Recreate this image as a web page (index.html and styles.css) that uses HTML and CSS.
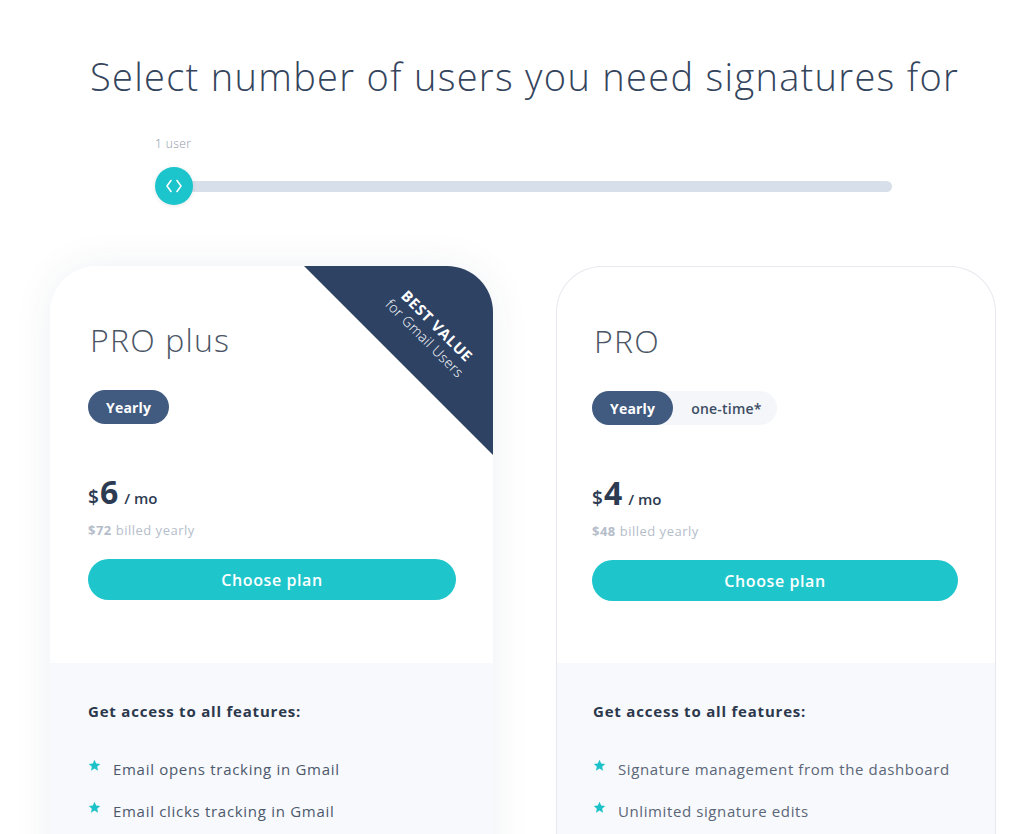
FILE: index.html
```html
<!DOCTYPE html>
<html lang="en">
<head>
<meta charset="utf-8">
<title>Pricing</title>
<link rel="stylesheet" href="styles.css">
</head>
<body>
<div class="page">
  <h1 class="title">Select number of users you need signatures for</h1>

  <div class="slider">
    <div class="slider-label">1 user</div>
    <div class="slider-row">
      <div class="slider-track"></div>
      <div class="knob">
        <svg width="20" height="16" viewBox="0 0 20 16"><path d="M7 2.5 L3 8 L7 13.5 M13 2.5 L17 8 L13 13.5" fill="none" stroke="#fff" stroke-width="1.6" stroke-linecap="round" stroke-linejoin="round"/></svg>
      </div>
    </div>
  </div>

  <div class="cards">
    <div class="card card-featured">
      <div class="ribbon">
        <div class="ribbon-text">
          <div class="ribbon-main">BEST VALUE</div>
          <div class="ribbon-sub">for Gmail Users</div>
        </div>
      </div>
      <div class="card-top">
        <h2 class="plan-name">PRO plus</h2>
        <div class="toggle">
          <span class="pill active">Yearly</span>
        </div>
        <div class="price"><span class="cur">$</span><span class="amount">6</span><span class="per">/ mo</span></div>
        <div class="billed"><b>$72</b> billed yearly</div>
        <button class="choose">Choose plan</button>
      </div>
      <div class="card-bottom">
        <div class="feat-title">Get access to all features:</div>
        <ul class="features medium">
          <li><svg class="star" viewBox="0 0 24 24"><path d="M12 1.5l3.1 6.9 7.4.7-5.6 5 1.7 7.4L12 17.6l-6.6 3.9 1.7-7.4-5.6-5 7.4-.7z"/></svg>Email opens tracking in Gmail</li>
          <li><svg class="star" viewBox="0 0 24 24"><path d="M12 1.5l3.1 6.9 7.4.7-5.6 5 1.7 7.4L12 17.6l-6.6 3.9 1.7-7.4-5.6-5 7.4-.7z"/></svg>Email clicks tracking in Gmail</li>
        </ul>
      </div>
    </div>

    <div class="card card-plain">
      <div class="card-top">
        <h2 class="plan-name">PRO</h2>
        <div class="toggle toggle-group">
          <span class="pill active">Yearly</span>
          <span class="pill">one-time*</span>
        </div>
        <div class="price"><span class="cur">$</span><span class="amount">4</span><span class="per">/ mo</span></div>
        <div class="billed"><b>$48</b> billed yearly</div>
        <button class="choose">Choose plan</button>
      </div>
      <div class="card-bottom">
        <div class="feat-title">Get access to all features:</div>
        <ul class="features">
          <li><svg class="star" viewBox="0 0 24 24"><path d="M12 1.5l3.1 6.9 7.4.7-5.6 5 1.7 7.4L12 17.6l-6.6 3.9 1.7-7.4-5.6-5 7.4-.7z"/></svg>Signature management from the dashboard</li>
          <li><svg class="star" viewBox="0 0 24 24"><path d="M12 1.5l3.1 6.9 7.4.7-5.6 5 1.7 7.4L12 17.6l-6.6 3.9 1.7-7.4-5.6-5 7.4-.7z"/></svg>Unlimited signature edits</li>
        </ul>
      </div>
    </div>
  </div>
</div>
</body>
</html>
```

FILE: styles.css
```css
* { box-sizing: border-box; }
html, body { margin: 0; padding: 0; background: #fff; }
body {
  font-family: "Open Sans", "Noto Sans", sans-serif;
  color: #2f3e55;
  overflow: hidden;
}
.page {
  width: 1046px;
  padding: 52px 0 0 50px;
}
.title {
  margin: 0;
  font-size: 38px;
  line-height: 48px;
  font-weight: 300;
  color: #34445c;
  padding-left: 40px;
  letter-spacing: 1.3px;
  white-space: nowrap;
}
.slider {
  margin-top: 36px;
  padding-left: 105px;
  width: 842px;
}
.slider-label {
  font-size: 12px;
  line-height: 16px;
  color: #8d97a6;
  font-weight: 300;
  letter-spacing: 0.4px;
}
.slider-row {
  position: relative;
  height: 40px;
  margin-top: 14px;
  display: flex;
  align-items: center;
}
.slider-track {
  margin-left: 20px;
  flex: 1;
  height: 11px;
  border-radius: 6px;
  background: #d7dfeb;
}
.knob {
  position: absolute;
  left: 0;
  top: 1px;
  width: 38px;
  height: 38px;
  border-radius: 50%;
  background: #1cc4cb;
  display: flex;
  align-items: center;
  justify-content: center;
  box-shadow: 0 1px 4px rgba(0,0,0,0.10);
}
.cards {
  display: flex;
  gap: 63px;
  margin-top: 60px;
}
.card {
  position: relative;
  width: 443px;
  border-radius: 46px 46px 0 0;
  overflow: hidden;
  background: #fff;
}
.card-featured {
  box-shadow: 0 0 40px rgba(30, 50, 90, 0.07);
}
.card-plain {
  width: 440px;
  border: 1px solid #e6e9ee;
  border-bottom: none;
}
.card-top {
  height: 397px;
  padding: 54px 37px 0 38px;
}
.card-plain .card-top { height: 396px; padding-left: 35px; padding-right: 37px; }
.plan-name {
  margin: 0;
  font-size: 32px;
  line-height: 40px;
  font-weight: 300;
  color: #4b5565;
  padding-left: 2px;
  letter-spacing: 1.2px;
}
.toggle {
  margin-top: 30px;
  display: flex;
  height: 34px;
}
.toggle-group {
  width: 185px;
  background: #f4f6fa;
  border-radius: 17px;
}
.pill {
  flex-shrink: 0;
  white-space: nowrap;
  height: 34px;
  border-radius: 17px;
  padding: 0 18px;
  display: flex;
  align-items: center;
  font-size: 14px;
  font-weight: 700;
  color: #3d4c63;
  letter-spacing: 0.2px;
}
.pill.active {
  background: #415a80;
  color: #fff;
}
.toggle-group .pill { font-weight: 600; }
.toggle-group .pill.active { font-weight: 700; }
.price {
  margin-top: 46px;
  display: flex;
  align-items: baseline;
  color: #2d3b52;
  height: 36px;
}
.cur { font-size: 19px; font-weight: 600; }
.amount { font-size: 32px; font-weight: 700; margin-left: 1px; }
.per { font-size: 15px; font-weight: 600; margin-left: 6px; }
.billed {
  margin-top: 15px;
  font-size: 13px;
  color: #b5bdca;
  font-weight: 400;
  letter-spacing: 0.5px;
}
.billed b { font-weight: 700; }
.choose {
  margin-top: 20px;
  width: 100%;
  height: 41px;
  border: none;
  border-radius: 21px;
  background: #1ec6cc;
  color: #fff;
  font-family: inherit;
  font-size: 16px;
  font-weight: 600;
  letter-spacing: 0.6px;
  display: block;
}
.card-bottom {
  background: #f7f9fc;
  padding: 38px 37px 40px 38px;
  height: 260px;
}
.card-plain .card-bottom { padding-left: 36px; }
.feat-title {
  font-size: 15px;
  font-weight: 700;
  color: #2c384c;
  line-height: 20px;
  letter-spacing: 0.8px;
}
.features {
  list-style: none;
  margin: 27px 0 0 0;
  padding: 0;
}
.features li {
  display: flex;
  align-items: center;
  height: 42px;
  font-size: 15px;
  color: #5b6678;
  font-weight: 400;
  letter-spacing: 0.6px;
}
.features.medium li { font-weight: 500; color: #4c586b; letter-spacing: 0.7px; }
.star {
  width: 13px;
  height: 13px;
  fill: #1dc2c9;
  margin: 0 12px 0 0;
  position: relative;
  top: -4px;
  flex-shrink: 0;
}
.ribbon {
  position: absolute;
  top: 0;
  right: 0;
  width: 189px;
  height: 189px;
  background: #2e4264;
  clip-path: polygon(0 0, 100% 0, 100% 100%);
}
.ribbon-text {
  position: absolute;
  left: 42px;
  top: 48px;
  width: 170px;
  transform: rotate(45deg);
  text-align: center;
  color: #fff;
  line-height: 18px;
}
.ribbon-main { font-size: 15px; font-weight: 700; letter-spacing: 0.6px; }
.ribbon-sub { font-size: 14px; font-weight: 300; letter-spacing: 0.4px; }
```
